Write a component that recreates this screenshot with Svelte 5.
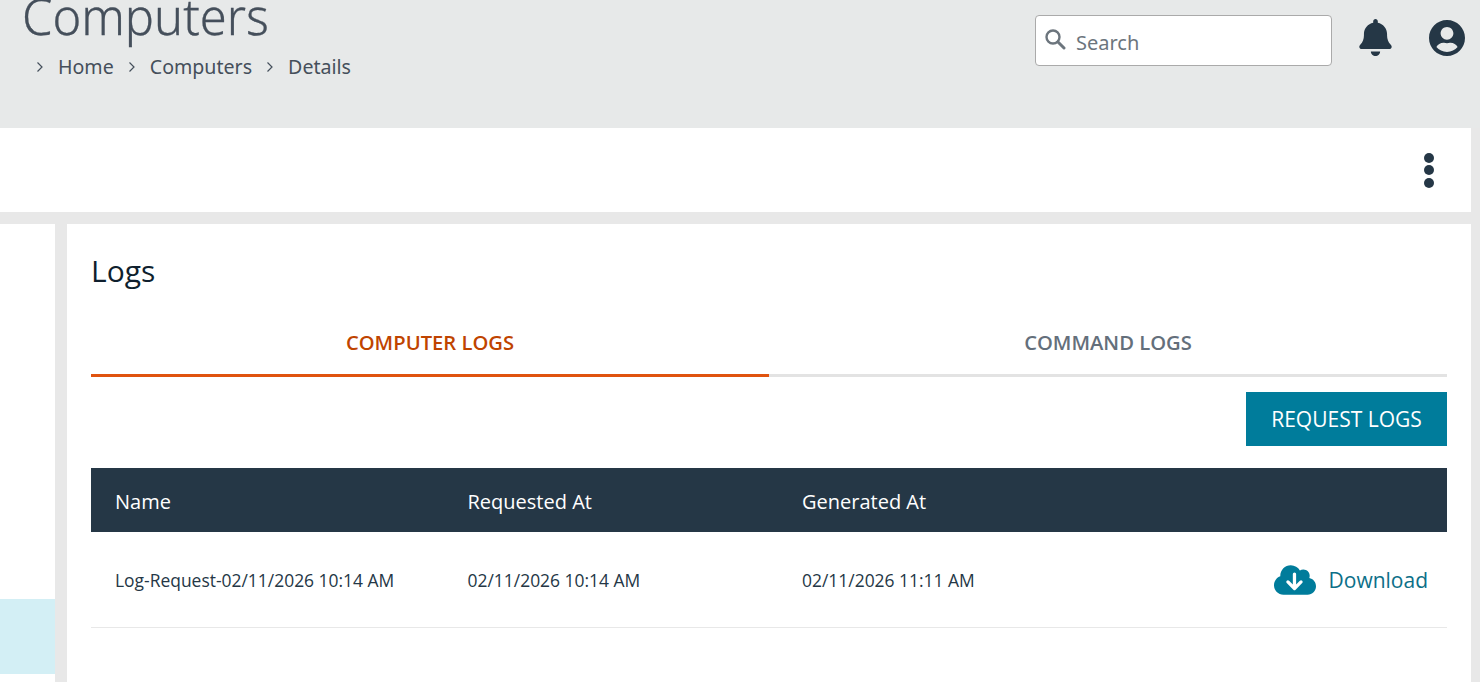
<script lang="ts">
  const crumbs = ['Home', 'Computers', 'Details'];
  const tabs = ['COMPUTER LOGS', 'COMMAND LOGS'];
  let activeTab = $state(0);

  const logs = [
    {
      name: 'Log-Request-02/11/2026 10:14 AM',
      requested: '02/11/2026 10:14 AM',
      generated: '02/11/2026 11:11 AM',
    },
  ];
</script>

<div class="page">
  <header class="topbar">
    <div class="heading">
      <h1>Computers</h1>
      <nav class="crumbs">
        {#each crumbs as crumb}
          <svg class="chevron" viewBox="0 0 8 12" width="8" height="12">
            <path d="M1.5 1.5 6 6l-4.500 4.500" fill="none" stroke="#454f5b" stroke-width="1.2" />
          </svg>
          <span>{crumb}</span>
        {/each}
      </nav>
    </div>
    <div class="actions">
      <div class="search">
        <svg viewBox="0 0 22 22" width="22" height="22">
          <circle cx="9" cy="9" r="6.500" fill="none" stroke="#6c757d" stroke-width="2.400" />
          <path d="M14 14l6 6" stroke="#6c757d" stroke-width="3" stroke-linecap="round" />
        </svg>
        <span>Search</span>
      </div>
      <svg class="bell" viewBox="0 0 448 512" width="33" height="37">
        <path
          fill="#253746"
          d="M224 0c-17.700 0-32 14.300-32 32V51.200C119 66 64 130.600 64 208v18.800c0 47-17.300 92.400-48.500 127.600l-7.400 8.300c-8.400 9.400-10.400 22.900-5.300 34.400S19.400 416 32 416H416c12.600 0 24-7.400 29.200-18.900s3.100-25-5.300-34.400l-7.400-8.300C401.300 319.200 384 273.900 384 226.800V208c0-77.400-55-142-128-156.800V32c0-17.700-14.300-32-32-32zm45.300 493.300c12-12 18.700-28.300 18.700-45.300H224 160c0 17 6.700 33.300 18.700 45.300s28.300 18.700 45.300 18.700s33.300-6.700 45.300-18.700z"
        />
      </svg>
      <svg class="user" viewBox="0 8 496 496" width="36" height="36">
        <path
          fill="#253746"
          d="M248 8C111 8 0 119 0 256s111 248 248 248 248-111 248-248S385 8 248 8zm0 96c48.600 0 88 39.400 88 88s-39.400 88-88 88-88-39.400-88-88 39.400-88 88-88zm0 344c-58.700 0-111.300-26.600-146.500-68.200 18.800-35.400 55.600-59.800 98.500-59.800 2.400 0 4.800.4 7.100 1.100 13 4.200 26.600 6.900 40.900 6.900 14.300 0 28-2.700 40.900-6.900 2.300-.7 4.700-1.100 7.100-1.100 42.900 0 79.700 24.400 98.500 59.800C359.300 421.400 306.700 448 248 448z"
        />
      </svg>
    </div>
  </header>

  <div class="toolbar">
    <div class="dots"><i></i><i></i><i></i></div>
  </div>

  <div class="body">
    <aside class="side">
      <div class="side-fill"></div>
      <div class="side-active"></div>
    </aside>

    <main class="panel">
      <h2>Logs</h2>
      <div class="tabs">
        {#each tabs as tab, i}
          <button type="button" class="tab" class:active={activeTab === i} onclick={() => (activeTab = i)}>
            {tab}
          </button>
        {/each}
      </div>
      <div class="request-row">
        <button type="button" class="request">REQUEST LOGS</button>
      </div>
      <div class="table">
        <div class="row head">
          <div>Name</div>
          <div>Requested At</div>
          <div>Generated At</div>
          <div></div>
        </div>
        {#each logs as log}
          <div class="row item">
            <div>{log.name}</div>
            <div>{log.requested}</div>
            <div>{log.generated}</div>
            <div class="download">
              <svg viewBox="0 0 640 512" width="42" height="34">
                <path
                  fill="#007c9b"
                  d="M144 480C64.500 480 0 415.500 0 336c0-62.800 40.200-116.200 96.200-135.900c-.1-2.700-.2-5.400-.2-8.100c0-88.400 71.600-160 160-160c59.300 0 111 32.200 138.700 80.200C409.900 102 428.300 96 448 96c53 0 96 43 96 96c0 12.200-2.300 23.800-6.400 34.600C596 238.400 640 290.100 640 352c0 70.700-57.300 128-128 128H144z"
                />
                <path d="M312 165V375M212 285l100 100 100-100" fill="none" stroke="#fff" stroke-width="50" stroke-linecap="round" stroke-linejoin="round" />
              </svg>
              <span>Download</span>
            </div>
          </div>
        {/each}
      </div>
    </main>
  </div>
</div>

<style>
  :global(body) {
    margin: 0;
    background: #e8e8e8;
    overflow: hidden;
  }

  .page {
    height: 682px;
    overflow: hidden;
    font-family: 'Open Sans', sans-serif;
    color: #253746;
  }

  .topbar {
    height: 128px;
    box-sizing: border-box;
    background: #e7e9e9;
    display: flex;
    justify-content: space-between;
    align-items: flex-start;
  }

  .heading {
    padding-left: 22px;
  }

  h1 {
    margin: -15px 0 0;
    font-family: 'Noto Sans', sans-serif;
    font-weight: 300;
    font-size: 48.800px;
    line-height: 62px;
    color: #454f5b;
    -webkit-text-stroke: 0.3px #454f5b;
  }

  .crumbs {
    display: flex;
    align-items: center;
    margin-top: 6px;
    padding-left: 14px;
    font-family: 'Noto Sans', sans-serif;
    font-size: 19.600px;
    line-height: 28px;
    color: #454f5b;
  }

  .chevron {
    margin-right: 14px;
  }

  .crumbs span {
    margin-right: 14px;
  }

  .actions {
    display: flex;
    align-items: flex-start;
    padding: 15px 15px 0 0;
  }

  .search {
    width: 297px;
    height: 51px;
    box-sizing: border-box;
    display: flex;
    align-items: center;
    gap: 10px;
    padding: 3px 0 0 8px;
    background: #fff;
    border: 1px solid #aaa;
    border-radius: 4px;
    font-family: 'Noto Sans', sans-serif;
    font-size: 20px;
    color: #6c757d;
  }

  .search svg {
    margin-top: -6px;
  }

  .bell {
    margin: 4px 0 0 27px;
  }

  .user {
    margin: 5px 0 0 37px;
  }

  .toolbar {
    width: 1471px;
    height: 84px;
    background: #fff;
    display: flex;
    align-items: center;
    justify-content: flex-end;
  }

  .dots {
    display: flex;
    flex-direction: column;
    gap: 2.500px;
    margin-right: 37px;
  }

  .dots i {
    width: 10px;
    height: 10px;
    border-radius: 50%;
    background: #253746;
  }

  .body {
    display: flex;
    width: 1471px;
    margin-top: 12px;
    gap: 12px;
    height: 458px;
  }

  .side {
    width: 55px;
    display: flex;
    flex-direction: column;
    background: #fff;
  }

  .side-fill {
    height: 375px;
  }

  .side-active {
    height: 75px;
    background: #d3eff5;
  }

  .panel {
    flex: 1;
    background: #fff;
    padding: 0 24px;
  }

  h2 {
    margin: 25px 0 0;
    font-weight: 400;
    font-size: 30px;
    line-height: 44px;
    color: #0f1f2e;
  }

  .tabs {
    display: flex;
    margin-top: 25px;
  }

  .tab {
    flex: 1;
    height: 59px;
    padding: 0 0 8px;
    background: none;
    border: 0;
    border-bottom: 3px solid #e3e3e3;
    font-family: 'Open Sans', sans-serif;
    font-size: 20.200px;
    font-weight: 600;
    color: #646f7b;
    cursor: pointer;
  }

  .tab.active {
    color: #bf4400;
    border-bottom-color: #e0530f;
  }

  .request-row {
    display: flex;
    justify-content: flex-end;
    margin-top: 15px;
  }

  .request {
    width: 201px;
    height: 54px;
    background: #007c9b;
    color: #fff;
    border: 0;
    font-family: 'Open Sans', sans-serif;
    font-size: 21px;
    cursor: pointer;
  }

  .table {
    margin-top: 22px;
  }

  .row {
    display: grid;
    grid-template-columns: 352.500px 334.500px 1fr auto;
    align-items: center;
    padding: 0 19px 0 24px;
  }

  .head {
    height: 64px;
    box-sizing: border-box;
    padding-top: 2px;
    background: #253746;
    color: #fff;
    font-size: 20px;
  }

  .item {
    height: 96px;
    box-sizing: border-box;
    border-bottom: 1px solid #e8e8e8;
    font-size: 17.450px;
    color: #253746;
  }

  .download {
    display: flex;
    align-items: center;
    gap: 13px;
    font-size: 21px;
    color: #0d6f88;
  }
</style>
